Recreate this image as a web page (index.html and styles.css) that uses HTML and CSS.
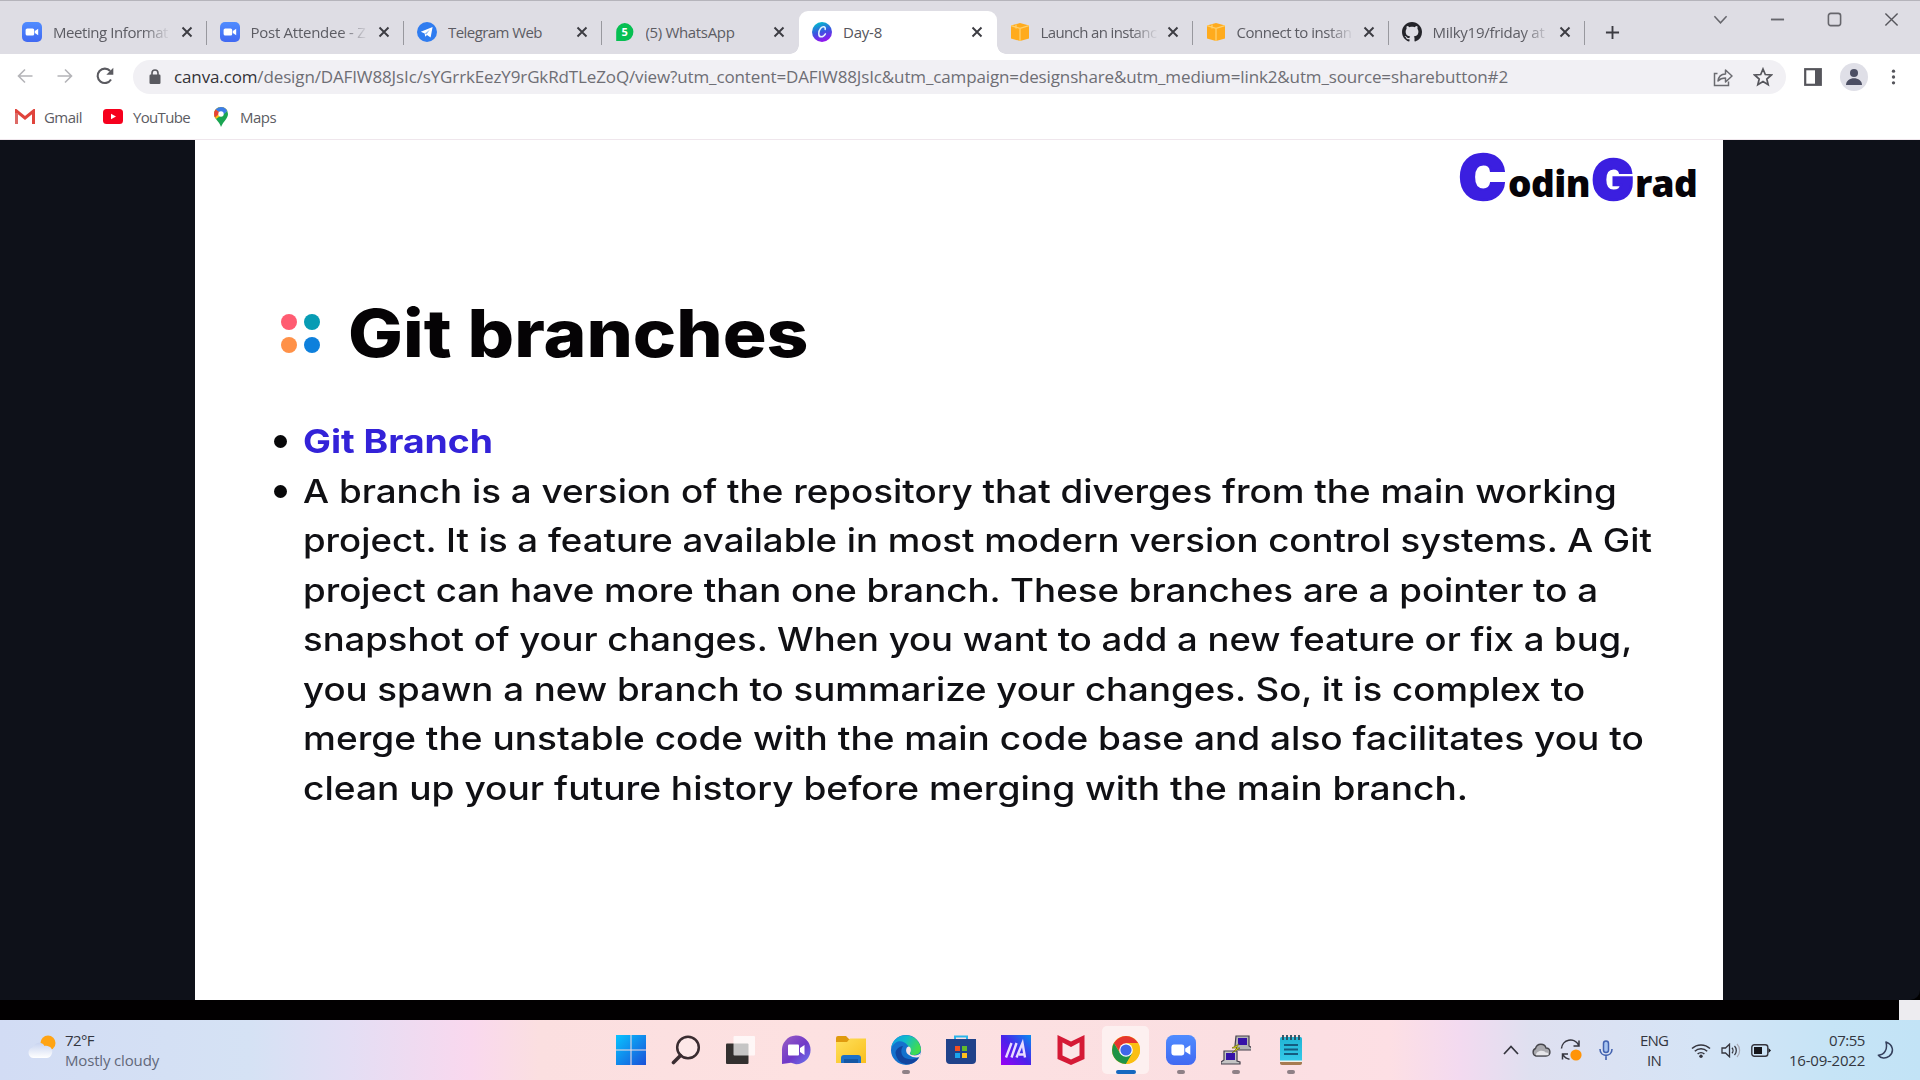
FILE: index.html
```html
<!DOCTYPE html>
<html lang="en">
<head>
<meta charset="utf-8">
<title>Day-8</title>
<link rel="stylesheet" href="styles.css">
</head>
<body>
<svg class="defs" width="0" height="0">
  <defs>
    <linearGradient id="gz" x1="0" y1="0" x2="0" y2="1"><stop offset="0" stop-color="#4f8cff"/><stop offset="1" stop-color="#4169f2"/></linearGradient>
    <linearGradient id="gcanva" x1="0.3" y1="0" x2="0.6" y2="1"><stop offset="0" stop-color="#00c0cc"/><stop offset=".5" stop-color="#3a55e0"/><stop offset="1" stop-color="#9a10f0"/></linearGradient>
    <linearGradient id="gwin" x1="0" y1="0" x2="1" y2="1"><stop offset="0" stop-color="#08c4ff"/><stop offset="1" stop-color="#1a50d8"/></linearGradient>
    <linearGradient id="gchat" x1="0" y1="0" x2="1" y2="1"><stop offset="0" stop-color="#9a5fc4"/><stop offset=".55" stop-color="#7038c8"/><stop offset="1" stop-color="#6a7af0"/></linearGradient>
    <linearGradient id="gfold" x1="0" y1="0" x2="1" y2="1"><stop offset="0" stop-color="#ffe05c"/><stop offset="1" stop-color="#f9bf1c"/></linearGradient>
    <linearGradient id="gedge" x1="0" y1="0" x2="1" y2=".4"><stop offset="0" stop-color="#1396e6"/><stop offset=".5" stop-color="#10bccb"/><stop offset="1" stop-color="#40dc50"/></linearGradient>
    <linearGradient id="gasus" x1="1" y1="0" x2="0" y2="1"><stop offset="0" stop-color="#0a8cf0"/><stop offset=".5" stop-color="#4a22ea"/><stop offset="1" stop-color="#9a00f5"/></linearGradient>
    <linearGradient id="gcloud" x1="0" y1="0" x2="0" y2="1"><stop offset="0" stop-color="#c8d4f0"/><stop offset="1" stop-color="#fff"/></linearGradient>
    <linearGradient id="gnote" x1="0" y1="0" x2="0" y2="1"><stop offset="0" stop-color="#20b4d4"/><stop offset="1" stop-color="#38ccec"/></linearGradient>
    <symbol id="zoom" viewBox="0 0 20 20"><rect width="20" height="20" rx="5" fill="url(#gz)"/><rect x="3.6" y="6.4" width="8.6" height="7.2" rx="1.6" fill="#fff"/><path d="M12.8 9l3.4-2.2v6.4L12.8 11z" fill="#fff"/></symbol>
    <symbol id="aws" viewBox="0 0 20 20"><path d="M1 3.600L10 1l9 2.600v12.800L10 19l-9-2.600z" fill="#ffab1d"/><path d="M1 3.600L10 6.400l9-2.800M10 6.400V19M6 2.400v4" stroke="#ffd06d" stroke-width="1.300" fill="none"/></symbol>
    <symbol id="x" viewBox="0 0 12 12"><path d="M1.500 1.500l9 9M10.500 1.500l-9 9" stroke="#3c3c42" stroke-width="1.900"/></symbol>
  </defs>
</svg>
<div class="screen">
  <header class="tabs">
    <div class="tab sep"><svg class="fav"><use href="#zoom"/></svg><span class="title fade meeting">Meeting Informat</span><svg class="close"><use href="#x"/></svg></div>
    <div class="tab sep"><svg class="fav"><use href="#zoom"/></svg><span class="title fade attendee">Post Attendee - Z</span><svg class="close"><use href="#x"/></svg></div>
    <div class="tab sep"><svg class="fav" viewBox="0 0 20 20"><circle cx="10" cy="10" r="10" fill="#2f7cf0"/><path d="M3.800 9.800L15.600 5l-2 10.600-3.600-2.600-1.800 1.800-.5-3.300z" fill="#fff"/><path d="M7.800 11.400l5.200-4-3.600 5" fill="#8db9f8"/></svg><span class="title telegram">Telegram Web</span><svg class="close"><use href="#x"/></svg></div>
    <div class="tab"><svg class="fav" viewBox="0 0 20 20"><path d="M1.200 19V10A8.600 8.900 0 1 1 10 18.900z" fill="#06bf52"/><text x="9.700" y="14" class="badge">5</text></svg><span class="title whatsapp">(5) WhatsApp</span><svg class="close"><use href="#x"/></svg></div>
    <div class="tab active"><svg class="fav" viewBox="0 0 20 20"><circle cx="10" cy="10" r="10" fill="url(#gcanva)"/><path d="M13.200 7.400c.6-3-2.500-3.600-4.500-1.200-2.500 3-2.800 8.600.4 8.600 2 0 3.400-1.400 4.300-3" stroke="#e4f4ff" stroke-width="1.500" fill="none" stroke-linecap="round"/></svg><span class="title day">Day-8</span><svg class="close"><use href="#x"/></svg></div>
    <div class="tab sep short"><svg class="fav"><use href="#aws"/></svg><span class="title fade launch">Launch an instanc</span><svg class="close"><use href="#x"/></svg></div>
    <div class="tab sep short"><svg class="fav"><use href="#aws"/></svg><span class="title fade connect">Connect to instan</span><svg class="close"><use href="#x"/></svg></div>
    <div class="tab sep short"><svg class="fav" viewBox="0 0 16 16"><path fill="#24242a" d="M8 0C3.58 0 0 3.58 0 8c0 3.54 2.29 6.53 5.47 7.59.4.07.55-.17.55-.38 0-.19-.01-.82-.01-1.49-2.01.37-2.53-.49-2.69-.94-.09-.23-.48-.94-.82-1.13-.28-.15-.68-.52-.01-.53.63-.01 1.08.58 1.23.82.72 1.21 1.87.87 2.33.66.07-.52.28-.87.51-1.07-1.78-.2-3.64-.89-3.64-3.95 0-.87.31-1.59.82-2.15-.08-.2-.36-1.02.08-2.12 0 0 .67-.21 2.2.82.64-.18 1.32-.27 2-.27s1.36.09 2 .27c1.53-1.04 2.2-.82 2.2-.82.44 1.1.16 1.92.08 2.12.51.56.82 1.27.82 2.15 0 3.07-1.87 3.75-3.65 3.95.29.25.54.73.54 1.48 0 1.07-.01 1.93-.01 2.2 0 .21.15.46.55.38A8.01 8.01 0 0 0 16 8c0-4.42-3.58-8-8-8z"/></svg><span class="title fade milky">Milky19/friday at</span><svg class="close"><use href="#x"/></svg></div>
    <svg class="plus" viewBox="0 0 16 16"><path d="M8 1v14M1 8h14" stroke="#3c3c42" stroke-width="2"/></svg>
    <div class="winctl">
      <svg viewBox="0 0 16 16"><path d="M1.500 4.500L8 11.500l6.500-7" stroke="#66666c" stroke-width="1.600" fill="none"/></svg>
      <svg viewBox="0 0 16 16"><path d="M1 8h14" stroke="#66666c" stroke-width="2"/></svg>
      <svg viewBox="0 0 16 16"><rect x="1.500" y="1.500" width="13" height="13" rx="2.500" stroke="#66666c" stroke-width="1.700" fill="none"/></svg>
      <svg viewBox="0 0 16 16"><path d="M1.500 1.500l13 13M14.500 1.500l-13 13" stroke="#56565c" stroke-width="1.500"/></svg>
    </div>
  </header>
  <nav class="toolbar">
    <div class="navbtns">
      <svg viewBox="0 0 16 16"><path d="M15.500 8H1.500M8 1.500L1.500 8 8 14.500" stroke="#b4b4b8" stroke-width="1.600" fill="none"/></svg>
      <svg viewBox="0 0 16 16"><path d="M.5 8h14M8 1.500L14.500 8 8 14.500" stroke="#b4b4b8" stroke-width="1.600" fill="none"/></svg>
      <svg viewBox="0 0 18 18"><path d="M15 12.500A7.200 7.200 0 1 1 14.200 4" stroke="#5a5a60" stroke-width="2.100" fill="none"/><path d="M17.300.8v7h-7z" fill="#5a5a60"/></svg>
    </div>
    <div class="omnibox">
      <svg class="lock" viewBox="0 0 12 16"><rect x=".5" y="5.500" width="11" height="9.500" rx="1.200" fill="#5a5a60"/><path d="M3 6V4a3 3 0 0 1 6 0v2" stroke="#5a5a60" stroke-width="1.600" fill="none"/></svg>
      <span class="url"><em>canva.com</em>/design/DAFIW88JsIc/sYGrrkEezY9rGkRdTLeZoQ/view?utm_content=DAFIW88JsIc&amp;utm_campaign=designshare&amp;utm_medium=link2&amp;utm_source=sharebutton#2</span>
      <svg class="share" viewBox="0 0 20 20"><path d="M4.500 6.500H1.500v12h14v-4" stroke="#6b6b70" stroke-width="1.500" fill="none"/><path d="M5 14c.5-4.500 3-6.800 7.500-7V3l6.500 6-6.500 6v-4c-3.500 0-5.500.8-7.500 3z" stroke="#6b6b70" stroke-width="1.500" fill="none" stroke-linejoin="round"/></svg>
      <svg class="star" viewBox="0 0 20 20"><path d="M10 2l2.300 5.500 6 .5-4.500 4 1.400 5.800L10 14.600l-5.200 3.200L6.200 12 1.700 8l6-.5z" stroke="#55555b" stroke-width="1.700" fill="none"/></svg>
    </div>
    <svg class="panel" viewBox="0 0 18 18"><rect x="1.200" y="1.200" width="15.600" height="15.600" fill="none" stroke="#55555b" stroke-width="2.200"/><rect x="11" y="1" width="6" height="16" fill="#55555b"/></svg>
    <svg class="avatar" viewBox="0 0 28 28"><circle cx="14" cy="14" r="14" fill="#dfdfe7"/><circle cx="14" cy="10" r="4" fill="#4c4f63"/><path d="M6 22c0-9 16-9 16 0z" fill="#4c4f63"/></svg>
    <svg class="dots" viewBox="0 0 6 20"><circle cx="3" cy="3" r="2" fill="#55555b"/><circle cx="3" cy="10" r="2" fill="#55555b"/><circle cx="3" cy="17" r="2" fill="#55555b"/></svg>
  </nav>
  <div class="bookmarks">
    <svg class="gmail" viewBox="0 0 20 15"><path d="M1.500 15V2L10 9l8.500-7v13" stroke="#e0443c" stroke-width="3" fill="none"/><path d="M1.500 4v11" stroke="#dd6a66" stroke-width="3"/></svg><span class="bm1">Gmail</span>
    <svg class="yt" viewBox="0 0 20 15"><rect width="20" height="15" rx="3.500" fill="#f6001d"/><path d="M8 4.700l5 2.800-5 2.800z" fill="#fff"/></svg><span class="bm2">YouTube</span>
    <svg class="maps" viewBox="0 0 14 20"><path d="M7 0a7 7 0 0 1 7 7c0 4.500-4.500 7-7 13C5.500 14.500 0 11.500 0 7a7 7 0 0 1 7-7z" fill="#1aa552"/><path d="M7 0a7 7 0 0 1 6.300 4L2 12C.8 10.500 0 9 0 7a7 7 0 0 1 7-7z" fill="#fbc016"/><path d="M7 0a7 7 0 0 1 6.300 4L9 8 1.500 2.600A7 7 0 0 1 7 0z" fill="#3b7de8"/><path d="M1.600 2.500L6 6 1 10.500C-.4 8-.3 4.600 1.600 2.500z" fill="#e64236"/><circle cx="7" cy="7" r="2.700" fill="#fff"/></svg><span class="bm3">Maps</span>
  </div>
  <main class="page">
    <article class="slide">
      <div class="logo"><span class="lc">C</span><span class="lo odin">odin</span><span class="lg">G</span><span class="lo rad">rad</span></div>
      <div class="heading"><div class="fourdots"><i class="d1"></i><i class="d2"></i><i class="d3"></i><i class="d4"></i></div><h1>Git branches</h1></div>
      <ul class="points">
        <li class="term"><p>Git Branch</p></li>
        <li>
          <p class="l1">A branch is a version of the repository that diverges from the main working</p>
          <p class="l2">project. It is a feature available in most modern version control systems. A Git</p>
          <p class="l3">project can have more than one branch. These branches are a pointer to a</p>
          <p class="l4">snapshot of your changes. When you want to add a new feature or fix a bug,</p>
          <p class="l5">you spawn a new branch to summarize your changes. So, it is complex to</p>
          <p class="l6">merge the unstable code with the main code base and also facilitates you to</p>
          <p class="l7">clean up your future history before merging with the main branch.</p>
        </li>
      </ul>
    </article>
  </main>
  <div class="strip"></div>
  <footer class="taskbar">
    <div class="weather">
      <svg viewBox="0 0 30 26"><circle cx="21" cy="9" r="7.500" fill="#ffa414"/><path d="M6 24a6 5.500 0 0 1-.5-10.500C7.500 8 15 7 17.500 12c5-1 9 3 7.500 7.500-1 3-3 4.500-5.500 4.500z" fill="url(#gcloud)"/></svg>
      <div><p class="w1">72°F</p><p class="w2">Mostly cloudy</p></div>
    </div>
    <div class="apps">
      <div class="app"><svg viewBox="0 0 30 30"><path d="M0 0h14.500v14.500H0zM15.500 0H30v14.500H15.500zM0 15.500h14.500V30H0zM15.500 15.500H30V30H15.500z" fill="url(#gwin)"/></svg></div>
      <div class="app"><svg viewBox="0 0 30 30"><circle cx="17" cy="12.500" r="10.800" fill="#fff" fill-opacity=".25" stroke="#3a2c30" stroke-width="2.500"/><path d="M9.500 20.500l-7 7" stroke="#3a2c30" stroke-width="3.600" stroke-linecap="round"/></svg></div>
      <div class="app"><svg viewBox="0 0 30 30"><rect x="0" y="8.500" width="22.500" height="20.500" rx="1" fill="#33302f"/><rect x="7.500" y="1" width="21.500" height="19.500" rx="1" fill="#fff" fill-opacity=".72"/></svg></div>
      <div class="app"><svg viewBox="0 0 30 30"><path d="M1 29V16A14.300 14.300 0 1 1 15 29.200l-5-1.500z" fill="url(#gchat)"/><rect x="7" y="9.500" width="11" height="11" rx="1" fill="#fff"/><path d="M19 13l4.500-3v10L19 17z" fill="#fff"/></svg></div>
      <div class="app"><svg viewBox="0 0 30 30"><path d="M0 3a2 2 0 0 1 2-2h8l3 3h15v6H0z" fill="#e09a0e"/><path d="M0 7h11l3-3.500h16V28H0z" fill="url(#gfold)"/><path d="M5 28v-5a3 3 0 0 1 3-3h14a3 3 0 0 1 3 3v5z" fill="#1c70c8"/><path d="M8 24h14v4H8z" fill="#1558a4"/></svg></div>
      <div class="app run"><svg viewBox="0 0 30 30"><circle cx="15" cy="15" r="15" fill="#1471cd"/><path d="M.2 13C2-3 26-5 29.800 13c.7 5-3.500 7.500-8 7-4-.5-2-2-2.300-4.500C19 10.500 8-1 .2 13z" fill="url(#gedge)"/><path d="M11 13c-3 8 4 14.500 17 9.500C22 33 6 31 4.500 18 5 14 8 11.500 12 11z" fill="#12459f"/><path d="M30 17.500c-2 3-6 3.500-9.500 2.500-1.500-.5-2-1.300-1.300-2.500 1.300-1.500.8-6-1.700-6-3 .5-3.500 6.500.5 8.500 3 2.500 8 3 10.500 2z" fill="#fbe3e6"/></svg></div>
      <div class="app"><svg viewBox="0 0 30 30"><path d="M9 5V1.500h12V5" stroke="#2bb4ea" stroke-width="2" fill="none"/><path d="M0 4h30v21a4 4 0 0 1-4 4H4a4 4 0 0 1-4-4z" fill="#20428a"/><path d="M9 11h5v5H9z" fill="#f25022"/><path d="M16 11h5v5h-5z" fill="#63bb2a"/><path d="M9 18h5v5H9z" fill="#1aa4ee"/><path d="M16 18h5v5h-5z" fill="#ffc01c"/></svg></div>
      <div class="app"><svg viewBox="0 0 30 30"><rect width="30" height="30" fill="url(#gasus)"/><path d="M5 22.500L10.500 8M10.500 22.500L15.500 8M15.500 22.500L21.500 8l2.500 14.500M18 19.500h5" stroke="#e8dcff" stroke-width="2.400" fill="none"/></svg></div>
      <div class="app"><svg viewBox="0 0 30 30"><path d="M1.500 0L15 6.500 28.500 0v24L15 30 1.500 24z" fill="#d51a36"/><path d="M6.500 7.500L15 12l8.500-4.500v13L15 24.500l-8.500-4z" fill="#fbe6e8"/></svg></div>
      <div class="app current"><svg viewBox="0 0 30 30"><circle cx="15" cy="15" r="14" fill="#fbbf12"/><path d="M2.900 8A14 14 0 0 1 27.100 8H15l-5 11z" fill="#e6352e"/><path d="M2.900 8A14 14 0 0 0 15 29l6.500-11H9z" fill="#1e9347"/><path d="M27.100 8A14 14 0 0 1 15 29l6.500-11L20 8z" fill="#fbbf12"/><circle cx="15" cy="15" r="6.800" fill="#fff"/><circle cx="15" cy="15" r="5.600" fill="#3f66e8"/></svg></div>
      <div class="app run"><svg><use href="#zoom"/></svg></div>
      <div class="app run"><svg viewBox="0 0 30 30"><path d="M15 1h13v10l3 2v2H17l-3-4z" fill="#b4b4b4" stroke="#45404c" stroke-width="1.200"/><rect x="17" y="3" width="9" height="7" fill="#3511a8"/><path d="M3 16h13v10l3 1v2H0v-2l3-2z" fill="#c4c4c4" stroke="#45404c" stroke-width="1.200"/><rect x="5" y="18" width="9" height="7" fill="#3511a8"/><path d="M18 9l-7 4 5 0-5 5 8-5-4 0z" fill="#efe91c" stroke="#6a6a10" stroke-width=".7"/></svg></div>
      <div class="app run"><svg viewBox="0 0 30 30"><rect x="4" y="2" width="22" height="27" rx="1.500" fill="url(#gnote)"/><path d="M4 26h22v2a2 2 0 0 1-2 2H6a2 2 0 0 1-2-2z" fill="#a87a50"/><path d="M4 25.500h22v1.500H4z" fill="#f0f0ea"/><path d="M7 0v5M11 0v5M15 0v5M19 0v5M23 0v5" stroke="#284c5c" stroke-width="1.800"/><path d="M8 10h14M8 14.500h14M8 19h14" stroke="#145c80" stroke-width="2"/></svg></div>
    </div>
    <div class="tray">
      <svg class="t1" viewBox="0 0 16 10"><path d="M1 9l7-7.500L15 9" stroke="#35353e" stroke-width="1.700" fill="none"/></svg>
      <svg class="t2" viewBox="0 0 20 14"><path d="M5 13a4 4 0 0 1-.5-7.500c1.500-5.500 9-5.500 10.500-.5 5 0 5.500 8 0 8z" fill="#a9a9ae" stroke="#46464c" stroke-width="1.400"/><path d="M5 12.200c0-5 8-6 10-2.500 1.500-.5 3 .5 2.500 2.500z" fill="#e6e6ea"/></svg>
      <svg class="t3" viewBox="0 0 22 22"><path d="M1.500 9.500A9 9 0 0 1 18.500 6M19 1.500V7h-5.500M9.500 20.200c-2.500-.3-5-2-6.500-4.500M2.500 20.500V15H8" stroke="#35353e" stroke-width="1.500" fill="none"/><circle cx="16" cy="16" r="5.600" fill="#ff9408"/></svg>
      <svg class="t4" viewBox="0 0 14 20"><rect x="4.500" y="1" width="5" height="11.500" rx="2.500" fill="#a8c4f0" stroke="#4262b0" stroke-width="1.500"/><path d="M1 9c0 8.500 12 8.500 12 0M7 15.500V20" stroke="#4262b0" stroke-width="1.600" fill="none"/></svg>
      <div class="lang"><p>ENG</p><p>IN</p></div>
      <svg class="t5" viewBox="0 0 20 15"><path d="M1 5.500a13 13 0 0 1 18 0M3.800 8.300a9 9 0 0 1 12.400 0M6.600 11a5 5 0 0 1 6.800 0" stroke="#35353e" stroke-width="1.500" fill="none"/><circle cx="10" cy="13.200" r="1.700" fill="#35353e"/></svg>
      <svg class="t6" viewBox="0 0 20 15"><path d="M1 5h3.500L8.500 1.200v12.600L4.500 10H1z" stroke="#35353e" stroke-width="1.300" fill="none"/><path d="M11 4.800c1.300 1.500 1.300 4 0 5.400M13.500 3c2.400 2.500 2.400 6.500 0 9" stroke="#35353e" stroke-width="1.300" fill="none"/><path d="M16 1c3.500 3.500 3.500 9.500 0 13" stroke="#a9a9b5" stroke-width="1.200" fill="none"/></svg>
      <svg class="t7" viewBox="0 0 20 13"><rect x=".8" y=".8" width="16" height="11.400" rx="2.500" stroke="#35353e" stroke-width="1.400" fill="none"/><rect x="3" y="3" width="8" height="7" fill="#15151a"/><path d="M17.500 4l2.500 2.500L17.500 9z" fill="#15151a"/></svg>
      <div class="clock"><p class="k1">07:55</p><p class="k2">16-09-2022</p></div>
      <svg class="t8" viewBox="0 0 18 20"><path d="M9.500 1.500C17 4 18.500 12 13 16.500 9 19.500 4 19 1.500 15.500 8 15.500 11.500 9 9.500 1.500z" stroke="#35405c" stroke-width="1.600" fill="none" stroke-linejoin="round"/></svg>
    </div>
  </footer>
</div>
</body>
</html>
```
FILE: styles.css
```css
* { box-sizing: border-box; }
body { margin: 0; background: #000; }
p, h1, ul { margin: 0; padding: 0; }
em { font-style: normal; color: #333338; }
svg { display: block; flex: none; }
.defs { position: absolute; }
.screen {
  width: 1920px; height: 1080px; overflow: hidden;
  display: flex; flex-direction: column;
  font-family: "Open Sans", "Noto Sans", sans-serif;
  white-space: nowrap;
}

/* Tab strip */
.tabs {
  height: 54px; background: #dedde4; border-top: 1px solid #b5b4bb;
  display: flex; padding: 10px 0 0 9px; flex: none;
}
.tab {
  width: 197.5px; height: 43px; padding: 0 14px 1px 13px;
  display: flex; align-items: center; position: relative; flex: none;
  color: #5c5c63; font-size: 15px;
}
.tab.short { width: 196px; }
.tab.sep::after { content: ""; position: absolute; right: 0; top: 10px; width: 1px; height: 24px; background: #98989e; }
.tab.active { background: #fff; border-radius: 9px 9px 0 0; color: #55555c; }
.tab.active::before, .tab.active::after {
  content: ""; position: absolute; bottom: 0; width: 9px; height: 9px;
}
.tab.active::before { left: -9px; background: radial-gradient(circle at 0 0, transparent 8.500px, #fff 9px); }
.tab.active::after { right: -9px; background: radial-gradient(circle at 100% 0, transparent 8.500px, #fff 9px); }
.fav { width: 20px; height: 20px; }
.badge { font: bold 11px "Open Sans", sans-serif; fill: #fff; text-anchor: middle; }
.title { margin-left: 11px; width: 120px; overflow: hidden; }
.title.fade { -webkit-mask-image: linear-gradient(90deg, #000 75%, transparent 98%); mask-image: linear-gradient(90deg, #000 75%, transparent 98%); }
.meeting { letter-spacing: -.43px; }
.attendee { letter-spacing: -.263px; }
.telegram { letter-spacing: -.563px; }
.whatsapp { letter-spacing: -.337px; }
.day { letter-spacing: -.228px; }
.launch { letter-spacing: -.617px; }
.connect { letter-spacing: -.472px; }
.milky { letter-spacing: -.276px; }
.close { width: 12px; height: 12px; margin-left: auto; }
.plus { width: 15px; height: 15px; margin: 14px 0 0 20px; }
.winctl { margin: -1px 21px 0 auto; display: flex; gap: 42px; padding-top: 2px; }
.winctl svg { width: 15px; height: 15px; }

/* Toolbar */
.toolbar { height: 46px; background: #fff; display: flex; align-items: center; flex: none; }
.navbtns { width: 133px; display: flex; align-items: center; padding: 0 0 2px 17px; gap: 24px; }
.navbtns svg { width: 16px; height: 16px; }
.navbtns svg:last-child { width: 18px; height: 18px; margin-left: -1px; }
.omnibox {
  width: 1653px; height: 34px; border-radius: 17px; background: #f1f0f4;
  display: flex; align-items: center; padding: 0 13px 1px 16px;
}
.lock { width: 12px; height: 16px; }
.url { margin: -1px 0 0 13px; flex: 1; font-size: 17px; letter-spacing: -.13px; color: #6e6e74; }
.share { width: 20px; height: 20px; margin-right: 20px; }
.star { width: 20px; height: 20px; }
.panel { width: 18px; height: 18px; margin-left: 18px; }
.avatar { width: 28px; height: 28px; margin-left: 18px; }
.dots { width: 5px; height: 18px; margin-left: 23px; }

.bookmarks {
  height: 40px; background: #fff; border-bottom: 1px solid #efe6ec; flex: none;
  display: flex; align-items: center; padding: 0 0 6px 15px; font-size: 15px; color: #5c5c63;
}
.gmail, .yt { width: 20px; height: 15px; }
.maps { width: 14px; height: 20px; }
.bm1 { margin-left: 9px; width: 59px; letter-spacing: -.541px; }
.bm2 { margin-left: 10px; width: 81px; letter-spacing: -.667px; }
.bm3 { margin-left: 12px; letter-spacing: -.539px; }

/* Presentation slide */
.page { height: 860px; background: #0e1119; padding-left: 195px; flex: none; border-radius: 0 0 10px 0; }
.slide { width: 1528px; height: 860px; background: #fff; }
.logo { height: 139px; display: flex; align-items: baseline; padding: 0 24px 0 1264px; font-weight: 800; line-height: 60px; color: #060308; }
.lc, .lg { font-family: Inter, sans-serif; font-weight: 900; color: #3b1fe0; -webkit-text-stroke: 2.500px #3b1fe0; flex: none; transform-origin: 0 50%; }
.lc { font-size: 60px; width: 49px; line-height: 70px; transform: translateY(1.500px) scaleX(1.040); }
.lg { font-size: 54px; width: 43px; transform: translateY(1.500px) scaleX(1.020); }
.lo { font-size: 37px; }
.odin { width: 84px; letter-spacing: -.551px; }
.rad { letter-spacing: -.74px; }
.heading { display: flex; align-items: center; padding-left: 86px; height: 108px; }
.fourdots { display: grid; grid-template-columns: 16px 16px; gap: 7px; width: 39px; }
.fourdots i { width: 16px; height: 16px; border-radius: 50%; }
.d1 { background: #ff5c72; }
.d2 { background: #079cb4; }
.d3 { background: #ff9148; }
.d4 { background: #0e80dc; }
h1 { margin-left: 28px; font: 800 66px/80px Inter, sans-serif; color: #050305; transform: scaleX(1.107); transform-origin: 0 50%; }
.points { list-style: none; padding: 30px 0 0 108px; font: 500 33px/49.500px Inter, sans-serif; color: #101014; }
.points li { position: relative; }
.points li::before { content: ""; position: absolute; left: -29px; top: 18px; width: 13px; height: 13px; border-radius: 50%; background: #08080a; }
.points .term { font-weight: 700; color: #3322d8; }
.points p { width: max-content; transform-origin: 0 50%; }
.term p { transform: scaleX(1.130); }
.l1 { transform: scaleX(1.115); }
.l2 { transform: scaleX(1.109); }
.l3 { transform: scaleX(1.1125); }
.l4 { transform: scaleX(1.1055); }
.l5 { transform: scaleX(1.111); }
.l6 { transform: scaleX(1.1225); }
.l7 { transform: scaleX(1.125); }

/* Taskbar */
.strip { height: 20px; background: linear-gradient(90deg, #020001 1899px, #edecf0 1899px); flex: none; }
.taskbar {
  height: 60px; flex: none; display: flex; align-items: center; color: #333640;
  background: linear-gradient(90deg, #d2dcf4 0, #d5e2f4 250px, #e4def4 350px, #f9d8ee 470px, #fbdfe0 540px, #fde1e1 800px, #fbdfe2 1250px, #fddfe4 1390px, #f3daf0 1460px, #dfe0f0 1530px, #d5e4f6 1700px, #c6e4f6 1830px, #c2e3f6 1920px);
}
.weather { width: 603px; display: flex; padding-left: 27px; }
.weather svg { width: 30px; height: 26px; margin-top: 4px; }
.weather div { margin-left: 8px; font-size: 15px; line-height: 20px; }
.w1 { letter-spacing: -.582px; }
.w2 { color: #62687a; letter-spacing: -.161px; }
.apps { display: flex; }
.app { width: 55px; height: 60px; display: flex; justify-content: center; padding-top: 15px; position: relative; }
.app svg { width: 30px; height: 30px; }
.app.run::after, .app.current::after { content: ""; position: absolute; bottom: 6px; width: 8px; height: 4px; border-radius: 2px; background: #8e8086; }
.app.current::after { width: 20px; background: #1668c0; }
.app.current::before { content: ""; position: absolute; left: 4px; top: 6px; width: 47px; height: 48px; border-radius: 5px; background: #fdf0f0; }
.app.current svg { position: relative; }
.tray { display: flex; align-items: center; margin-left: 185px; font-size: 15px; line-height: 20px; }
.t1 { width: 16px; height: 10px; }
.t2 { width: 20px; height: 14px; margin-left: 12px; }
.t3 { width: 22px; height: 22px; margin-left: 9px; }
.t4 { width: 14px; height: 20px; margin-left: 17px; }
.lang { width: 30px; margin-left: 26px; text-align: center; letter-spacing: -.8px; }
.t5 { width: 20px; height: 15px; margin-left: 22px; }
.t6 { width: 20px; height: 15px; margin-left: 10px; }
.t7 { width: 20px; height: 13px; margin-left: 10px; }
.clock { width: 78px; margin-left: 16px; text-align: right; }
.k1 { letter-spacing: -.45px; }
.k2 { letter-spacing: -.228px; }
.t8 { width: 17px; height: 20px; margin-left: 12px; }
```
